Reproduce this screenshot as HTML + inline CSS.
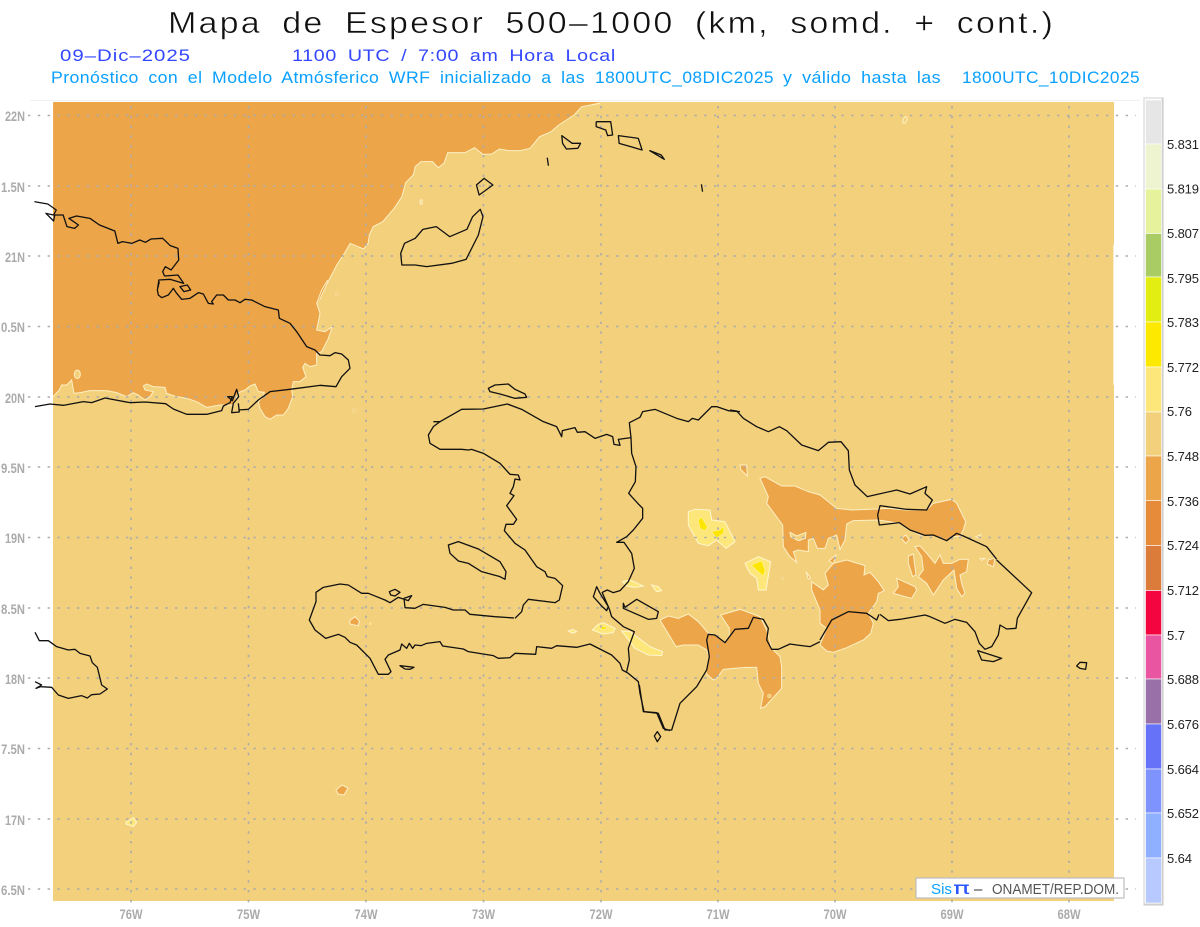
<!DOCTYPE html>
<html lang="es">
<head>
<meta charset="utf-8">
<title>Mapa de Espesor</title>
<style>
html,body{margin:0;padding:0;background:#fff}
body{width:1200px;height:927px;overflow:hidden}
svg{display:block;font-family:"Liberation Sans",sans-serif}
polygon,polyline,line,path{vector-effect:non-scaling-stroke}
.c{fill:none;stroke:#111;stroke-width:1.3;stroke-linejoin:round}
.o{fill:#eca549;stroke:#fdf0c4;stroke-width:1}
.f{fill:#eca549;stroke:none}
.l{fill:none;stroke:#fdf0c4;stroke-width:1}
.t{fill:#f3d07c;stroke:#fdf0c4;stroke-width:1}
.y{fill:#fee77a;stroke:#fff6cf;stroke-width:1}
.yy{fill:#fce600;stroke:#fff6a0;stroke-width:.5}
.g{stroke:#ababab;stroke-width:1.6;stroke-dasharray:2.4 7.4;fill:none}
.ax{fill:#ababab;font-weight:700;font-size:14px}
.cb{fill:#222;font-size:13px}
</style>
</head>
<body>
<svg width="1200" height="927" viewBox="0 0 1200 927" xmlns="http://www.w3.org/2000/svg">
<rect width="1200" height="927" fill="#fff"/>

<!-- titles -->
<text x="168" y="33" font-size="31" fill="#111" stroke="#fff" stroke-width=".5" letter-spacing="2" word-spacing="8" textLength="887" lengthAdjust="spacingAndGlyphs">Mapa de Espesor 500–1000 (km, somd. + cont.)</text>
<text x="60" y="61" font-size="17" fill="#3347ff" letter-spacing=".8" textLength="131" lengthAdjust="spacingAndGlyphs">09–Dic–2025</text>
<text x="292" y="61" font-size="17" fill="#3347ff" letter-spacing=".6" word-spacing="4" textLength="324" lengthAdjust="spacingAndGlyphs">1100 UTC / 7:00 am Hora Local</text>
<g font-size="16.5" fill="#0aa0ff" letter-spacing=".4" word-spacing="4">
<text x="51" y="83" textLength="534" lengthAdjust="spacingAndGlyphs">Pronóstico con el Modelo Atmósferico WRF inicializado a las</text>
<text x="595" y="83" textLength="179" lengthAdjust="spacingAndGlyphs">1800UTC_08DIC2025</text>
<text x="783" y="83" textLength="158" lengthAdjust="spacingAndGlyphs">y válido hasta las</text>
<text x="962" y="83" textLength="178" lengthAdjust="spacingAndGlyphs">1800UTC_10DIC2025</text>
</g>

<line x1="30" y1="100.5" x2="1140" y2="100.5" stroke="#f0f0f0"/>

<!-- map background -->
<rect x="53" y="102" width="1061" height="799" fill="#f3d07c"/>
<line x1="1113.5" y1="245" x2="1113.5" y2="385" stroke="#fbeecb" stroke-width="1"/>

<!-- NW orange region: upper part -->
<g transform="scale(.3827,.33333)">
<polygon class="f" points="139,306 1568,306 1520,320 1500,345 1460,375 1440,395 1410,410 1385,445 1360,452 1330,452 1305,447 1285,462 1262,463 1240,443 1215,458 1170,458 1160,490 1145,503 1130,485 1100,485 1085,500 1080,525 1060,548 1050,590 1030,625 1000,665 975,680 965,705 962,730 950,747 915,730 900,760 880,795 855,850 835,900 139,900"/>
<polyline class="l" points="1568,310 1520,320 1500,345 1460,375 1440,395 1410,410 1385,445 1360,452 1330,452 1305,447 1285,462 1262,463 1240,443 1215,458 1170,458 1160,490 1145,503 1130,485 1100,485 1085,500 1080,525 1060,548 1050,590 1030,625 1000,665 975,680 965,705 962,730 950,747 915,730 900,760 880,795 855,850 835,900"/>
<polygon class="t" points="1098,600 1103,600 1103,612 1098,612"/>
</g>
<!-- NW orange region: lower part -->
<g transform="translate(0,280) scale(.33333)">
<polygon class="f" points="159,0 983,0 965,30 950,70 960,100 950,150 975,155 997,140 985,175 965,215 950,220 950,255 930,260 915,250 908,262 918,290 900,305 880,305 875,330 878,350 865,385 850,405 830,405 810,418 795,410 780,385 775,365 790,350 793,337 775,335 765,312 750,318 735,330 715,338 700,375 660,375 620,382 590,365 560,355 530,350 500,340 495,322 460,320 440,312 430,318 435,330 460,335 450,350 435,360 415,345 400,338 380,350 350,338 320,332 270,332 240,338 222,340 215,300 200,315 185,315 178,330 159,350"/>
<polyline class="l" points="983,0 965,30 950,70 960,100 950,150 975,155 997,140 985,175 965,215 950,220 950,255 930,260 915,250 908,262 918,290 900,305 880,305 875,330 878,350 865,385 850,405 830,405 810,418 795,410 780,385 775,365 790,350 793,337 775,335 765,312 750,318 735,330 715,338 700,375 660,375 620,382 590,365 560,355 530,350 500,340 495,322 460,320 440,312 430,318 435,330 460,335 450,350 435,360 415,345 400,338 380,350 350,338 320,332 270,332 240,338 222,340 215,300 200,315 185,315 178,330 159,350"/>
<ellipse cx="232" cy="283" rx="9" ry="13" fill="#f3d07c" stroke="#fdf0c4" vector-effect="non-scaling-stroke"/>
<circle cx="1010" cy="43" r="5" class="t"/>
<circle cx="1062" cy="392" r="6" class="t"/>
</g>

<!-- orange blobs, Dominican Republic -->
<g transform="translate(730,400) scale(.33333)">
<polygon class="o" points="90,235 105,230 155,258 195,258 235,275 270,285 295,305 320,325 365,330 443,327 470,325 530,330 590,330 610,310 665,298 680,310 707,365 700,390 690,408 670,410 650,422 610,405 570,405 530,385 510,370 445,360 370,362 350,372 345,420 330,448 320,405 295,415 285,445 262,445 250,415 235,420 235,455 205,450 190,455 200,487 180,470 160,440 158,375 110,310 115,290"/>
<polygon class="t" points="180,397 200,408 228,397 226,415 205,422 182,410"/>
<polygon class="o" points="30,195 50,195 52,228 32,208"/>
<polygon class="o" points="515,415 527,405 537,420 527,430"/>
<polygon class="o" points="297,482 318,465 310,492"/>
<polygon class="o" points="245,545 280,570 295,555 285,520 310,490 350,480 405,497 402,525 420,517 445,545 463,572 445,580 440,605 415,640 430,670 422,700 400,720 350,743 310,757 290,753 270,735 290,685 270,670 270,630 245,570"/>
<polygon class="o" points="228,515 242,535 235,538"/>
<polygon class="o" points="500,535 555,560 560,570 545,595 525,590 490,580 505,560"/>
<polygon class="o" points="535,468 550,462 558,525 548,530 535,490"/>
<polygon class="o" points="555,440 570,438 590,460 615,490 630,465 640,490 665,490 690,478 715,478 710,515 690,525 695,550 705,580 695,590 680,565 672,510 640,540 610,585 590,550 565,530 580,510 575,470"/>
<polygon class="o" points="775,480 795,473 790,500 772,492"/>
<polygon class="o" points="750,475 765,475 755,481"/>
<polygon class="o" points="738,410 752,404 745,414"/>
<polygon class="y" points="45,490 85,470 122,485 108,570 85,570 80,535 60,520"/>
<polygon class="yy" points="65,495 95,483 105,510 100,528 80,510"/>
<circle cx="158" cy="535" r="4" class="t"/>
</g>

<!-- orange blob, south -->
<g transform="translate(600,590) scale(.33333)">
<polygon class="o" points="180,90 205,78 235,85 265,72 295,95 325,130 345,135 375,158 388,140 388,115 362,75 420,58 480,80 500,120 515,175 540,200 545,230 545,295 495,350 482,355 490,310 475,280 470,232 435,232 370,238 350,265 340,270 318,250 328,200 320,180 295,165 250,165 228,170 210,140"/>
<circle cx="508" cy="318" r="6" class="t"/>
</g>

<!-- yellow spots -->
<g transform="translate(400,380) scale(.33333)">
<polygon class="y" points="865,395 885,388 930,390 935,420 975,425 1005,485 978,505 950,480 925,497 895,490 865,435"/>
<polygon class="yy" points="895,420 905,413 922,440 915,452 900,445"/>
<polygon class="yy" points="935,455 960,450 972,440 970,460 950,473"/>
<polygon class="y" points="668,605 690,600 730,618 705,622 680,618"/>
<polygon class="y" points="755,615 775,620 785,632 770,635"/>
</g>
<g transform="translate(290,560) scale(.33333)">
<polygon class="y" points="907,210 925,193 940,188 975,205 970,218 940,222"/>
<polygon class="yy" points="935,200 950,200 945,208 935,208"/>
<polygon class="y" points="835,213 848,208 860,215 848,220"/>
<polygon class="y" points="995,213 1020,215 1080,260 1118,275 1115,287 1075,285 1035,265"/>
<polygon class="o" points="178,183 195,170 208,183 205,197 182,193"/>
<circle cx="241" cy="191" r="3" class="y"/>
</g>
<g transform="translate(0,620) scale(.33333)">
<polygon class="y" points="378,607 400,593 410,607 400,620 378,612"/>
</g>
<polygon class="o" points="336,790 342,785 348,788 344,795 338,794"/>
<ellipse cx="905" cy="120" rx="1.8" ry="3.6" transform="rotate(25 905 120)" fill="#f3d07c" stroke="#fdf0c4"/>

<!-- graticule -->
<g class="g">
<line x1="28" y1="115.5" x2="1136" y2="115.5"/>
<line x1="28" y1="186" x2="1136" y2="186"/>
<line x1="28" y1="256" x2="1136" y2="256"/>
<line x1="28" y1="326.5" x2="1136" y2="326.5"/>
<line x1="28" y1="397" x2="1136" y2="397"/>
<line x1="28" y1="467" x2="1136" y2="467"/>
<line x1="28" y1="537.5" x2="1136" y2="537.5"/>
<line x1="28" y1="608" x2="1136" y2="608"/>
<line x1="28" y1="678" x2="1136" y2="678"/>
<line x1="28" y1="748.5" x2="1136" y2="748.5"/>
<line x1="28" y1="819" x2="1136" y2="819"/>
<line x1="28" y1="889" x2="1136" y2="889"/>
<line x1="131" y1="106" x2="131" y2="905"/>
<line x1="248.5" y1="106" x2="248.5" y2="905"/>
<line x1="366" y1="106" x2="366" y2="905"/>
<line x1="483.5" y1="106" x2="483.5" y2="905"/>
<line x1="601" y1="106" x2="601" y2="905"/>
<line x1="718" y1="106" x2="718" y2="905"/>
<line x1="835" y1="106" x2="835" y2="905"/>
<line x1="952" y1="106" x2="952" y2="905"/>
<line x1="1069" y1="106" x2="1069" y2="905"/>
</g>

<!-- coasts zoom-1 frame -->
<g transform="scale(.3827,.33333)">
<polyline class="c" points="90,605 100,607 125,612 147,630 140,645 120,640 140,663 143,645 165,645 175,680 195,685 205,675 180,655 200,648 235,655 260,675 300,693 308,730 320,725 345,730 365,720 380,727 395,717 425,715 445,737 465,745 467,780 447,810 432,800 425,815 430,828 465,825 480,850 445,838 415,840 412,865"/>
<polygon class="c" points="1245,555 1265,535 1288,555 1252,585"/>
<polygon class="c" points="1050,795 1047,760 1057,730 1085,715 1105,688 1140,680 1175,710 1220,688 1235,650 1255,628 1262,650 1250,705 1218,778 1180,790 1115,800 1085,795"/>
<polygon class="c" points="1468,407 1495,430 1517,430 1510,445 1480,447 1470,430"/>
<polyline class="c" points="1430,473 1433,497"/>
</g>
<!-- coasts zoom-2 frame -->
<g transform="translate(600,0) scale(.3827,.33333)">
<polyline class="c" points="-10,365 28,365 33,405 20,407 15,390 -10,380 -10,365"/>
<polygon class="c" points="48,407 100,415 110,450 80,440 50,430"/>
<polygon class="c" points="130,452 160,465 168,478"/>
<polyline class="c" points="265,553 268,575"/>
</g>
<!-- Cuba east / south coast -->
<g transform="translate(0,280) scale(.33333)">
<polyline class="c" points="105,380 150,372 190,376 250,365 275,368 315,354 390,368 435,366 497,371 520,387 560,403 620,403 665,392 670,378 690,368 697,350 683,350 697,362 710,328 716,350 700,370 695,398 718,396 715,370"/>
<polyline class="c" points="715,390 745,388 775,360 810,335 870,328 960,316 1008,320 1025,290 1050,265 1045,240 1025,222 1005,218 990,227 960,225 945,210 920,200 890,155 870,130 838,115 835,90 795,80 755,60 735,58 720,68 705,60 685,60 670,45 650,45 635,65 640,72 625,70 610,42 595,38 570,55 545,58 530,40 520,25 505,45 485,53 475,45 472,30 478,5"/>
<polygon class="c" points="540,20 562,15 572,30 552,35"/>
</g>
<!-- Haiti, Tortue, Gonave -->
<g transform="translate(400,380) scale(.33333)">
<polygon class="c" points="265,25 285,15 325,12 345,28 375,42 380,52 345,55 300,42 270,35"/>
<polyline class="c" points="100,125 120,125 185,88 250,87 322,72 365,88 430,125 470,140 485,170 487,152 525,143 532,157 555,155 585,175 620,163 638,170 642,193 660,196 655,178 693,173 688,128 720,112 728,95 765,88 830,115 865,125 877,115 895,120 935,80 950,80 985,92 1020,95"/>
<polyline class="c" points="693,173 695,220 708,260 706,305 686,340 715,372 728,385 728,415 700,450 680,470 650,487 672,487 695,520 703,565 685,605 660,632 640,638 622,630 607,637"/>
<polygon class="c" points="590,620 580,650 607,680 620,692 625,680 600,640"/>
<polygon class="c" points="145,495 175,485 235,507 300,545 318,575 315,598 300,590 245,575 205,550 175,543 150,520"/>
<polyline class="c" points="120,125 100,140 85,165 90,190 120,208 185,208 205,210 215,208 250,220 300,250 330,283 355,285 360,300 345,297 340,320 330,340 342,347 320,377 350,418 340,433 318,433 313,452 345,490 375,510 410,560 435,575 442,590 465,595 488,617 478,660 465,668 385,658 370,675 365,695 345,715"/>
</g>
<g transform="translate(290,560) scale(.33333)">
<polyline class="c" points="672,174 615,170 540,163 525,150 490,150 465,142 400,133 375,145 345,143 342,115 365,107 355,122 325,112 300,128 285,120 235,100 215,100 175,75 150,72 100,82 78,97 78,125 58,180 75,210 107,235 145,223 165,232 180,247 200,255 240,295 265,343 295,343 303,335 285,298 295,285 330,270 335,252 350,265 358,250 368,265 375,255 393,257 410,250 450,245 458,258 520,267 535,275 610,287 625,295 660,293 675,280 737,283 740,260 785,265 800,257 860,262 900,252 965,285 990,310 997,330 1015,340 1045,365 1050,400 1062,455 1100,458 1120,505 1140,512"/>
<polyline class="c" points="936,96 958,147 965,170 1000,200 1033,215 1015,265 1018,300 1010,335"/>
<polygon class="c" points="330,317 372,322 360,328 345,327"/>
<polygon class="c" points="298,95 315,88 330,97 315,108 302,105"/>
</g>
<!-- Dominican Republic -->
<g transform="translate(730,400) scale(.33333)">
<polyline class="c" points="0,30 20,33 40,55 80,80 115,95 148,80 170,92 215,135 265,152 295,127 333,125 355,152 358,210 375,255 412,290 500,270 540,282 590,260 585,280 607,300 590,330 530,328 450,317 443,345 448,375 508,368 540,390 585,406 610,405 650,422 680,400 700,408 770,440 800,478"/>
<polyline class="c" points="447,643 440,660 410,640 355,635 305,660 270,720"/>
</g>
<g transform="translate(880,560) scale(.33333)">
<polyline class="c" points="350,0 455,98 412,175 408,205 380,207 360,195 355,225 335,260 315,268 298,250 285,215 260,187 225,178 195,190 150,170 135,165 60,178 25,182 0,163"/>
<polygon class="c" points="293,272 365,295 340,305 305,300"/>
<polygon class="c" points="590,318 600,307 620,308 617,328 600,325"/>
</g>
<g transform="translate(600,590) scale(.33333)">
<polyline class="c" points="660,155 630,170 590,165 570,162 535,178 515,178 500,150 505,115 490,88 460,82 445,115 405,118 375,158 345,135 325,133 320,150 328,200 320,240 290,290 240,340 215,420 195,420 175,370 130,365 118,285"/>
<polygon class="c" points="70,40 75,52 110,28 175,65 170,85 145,88 70,55"/>
<polygon class="c" points="163,438 172,425 182,440 172,455"/>
</g>
<!-- Jamaica -->
<g transform="translate(0,620) scale(.33333)">
<polyline class="c" points="105,37 118,62 145,62 170,80 205,90 225,88 240,100 270,108 277,128 292,142 305,195 322,207 300,222 275,224 262,234 245,227 205,235 175,225 155,202 122,200 108,205 125,195 105,185"/>
</g>

<!-- axis labels -->
<g class="ax" text-anchor="end">
<text x="25" y="121" textLength="20" lengthAdjust="spacingAndGlyphs">22N</text>
<text x="25" y="192" textLength="24" lengthAdjust="spacingAndGlyphs">1.5N</text>
<text x="25" y="262" textLength="20" lengthAdjust="spacingAndGlyphs">21N</text>
<text x="25" y="332" textLength="24" lengthAdjust="spacingAndGlyphs">0.5N</text>
<text x="25" y="403" textLength="20" lengthAdjust="spacingAndGlyphs">20N</text>
<text x="25" y="473" textLength="24" lengthAdjust="spacingAndGlyphs">9.5N</text>
<text x="25" y="543" textLength="20" lengthAdjust="spacingAndGlyphs">19N</text>
<text x="25" y="614" textLength="24" lengthAdjust="spacingAndGlyphs">8.5N</text>
<text x="25" y="684" textLength="20" lengthAdjust="spacingAndGlyphs">18N</text>
<text x="25" y="754" textLength="24" lengthAdjust="spacingAndGlyphs">7.5N</text>
<text x="25" y="825" textLength="20" lengthAdjust="spacingAndGlyphs">17N</text>
<text x="25" y="895" textLength="24" lengthAdjust="spacingAndGlyphs">6.5N</text>
</g>
<g class="ax" text-anchor="middle">
<text x="131" y="919" textLength="23" lengthAdjust="spacingAndGlyphs">76W</text>
<text x="248.5" y="919" textLength="23" lengthAdjust="spacingAndGlyphs">75W</text>
<text x="366" y="919" textLength="23" lengthAdjust="spacingAndGlyphs">74W</text>
<text x="483.5" y="919" textLength="23" lengthAdjust="spacingAndGlyphs">73W</text>
<text x="601" y="919" textLength="23" lengthAdjust="spacingAndGlyphs">72W</text>
<text x="718" y="919" textLength="23" lengthAdjust="spacingAndGlyphs">71W</text>
<text x="835" y="919" textLength="23" lengthAdjust="spacingAndGlyphs">70W</text>
<text x="952" y="919" textLength="23" lengthAdjust="spacingAndGlyphs">69W</text>
<text x="1069" y="919" textLength="23" lengthAdjust="spacingAndGlyphs">68W</text>
</g>

<!-- credit box -->
<rect x="916" y="878" width="208" height="20" fill="#fff" stroke="#bdbdbd" stroke-width="1.2"/>
<text x="931" y="894" font-size="15" fill="#0aa0ff" textLength="21" lengthAdjust="spacingAndGlyphs">Sis</text>
<text x="953" y="894" font-size="17" fill="#2a55ff" font-family="DejaVu Sans" textLength="17" lengthAdjust="spacingAndGlyphs">π</text>
<text x="974" y="894" font-size="15" fill="#333">–</text>
<text x="992" y="894" font-size="15" fill="#555" textLength="127" lengthAdjust="spacingAndGlyphs">ONAMET/REP.DOM.</text>

<!-- colour bar -->
<rect x="1144" y="98" width="19" height="807" fill="#fff" stroke="#d8d8d8" stroke-width="1.2"/>
<line x1="1162.500" y1="98" x2="1162.500" y2="905" stroke="#cfcfcf" stroke-width="2"/>
<line x1="1144" y1="904.500" x2="1163" y2="904.500" stroke="#cfcfcf" stroke-width="2"/>
<g stroke="#fff" stroke-width=".6">
<rect x="1145.5" y="100" width="16" height="44" fill="#e6e6e6"/>
<rect x="1145.5" y="144" width="16" height="45" fill="#eef3d0"/>
<rect x="1145.5" y="189" width="16" height="44.5" fill="#e6f29c"/>
<rect x="1145.5" y="233.5" width="16" height="43.5" fill="#a9cd64"/>
<rect x="1145.5" y="277" width="16" height="45" fill="#e2ee12"/>
<rect x="1145.5" y="322" width="16" height="45" fill="#fde800"/>
<rect x="1145.5" y="367" width="16" height="45" fill="#fee77a"/>
<rect x="1145.5" y="412" width="16" height="44" fill="#f3d07c"/>
<rect x="1145.5" y="456" width="16" height="44.5" fill="#eca549"/>
<rect x="1145.5" y="500.5" width="16" height="45" fill="#e58b3a"/>
<rect x="1145.5" y="545.5" width="16" height="45" fill="#db7c3b"/>
<rect x="1145.5" y="590.5" width="16" height="44.5" fill="#f5053f"/>
<rect x="1145.5" y="635" width="16" height="44" fill="#e955a0"/>
<rect x="1145.5" y="679" width="16" height="45" fill="#9a70a8"/>
<rect x="1145.5" y="724" width="16" height="45" fill="#6672f8"/>
<rect x="1145.5" y="769" width="16" height="44" fill="#7f93ff"/>
<rect x="1145.5" y="813" width="16" height="45" fill="#8fb0ff"/>
<rect x="1145.5" y="858" width="16" height="45" fill="#b7c9fe"/>
</g>
<g class="cb">
<text x="1167" y="149" textLength="32">5.831</text>
<text x="1167" y="193.500" textLength="32">5.819</text>
<text x="1167" y="238" textLength="32">5.807</text>
<text x="1167" y="283" textLength="32">5.795</text>
<text x="1167" y="327" textLength="32">5.783</text>
<text x="1167" y="372" textLength="32">5.772</text>
<text x="1167" y="416" textLength="25">5.76</text>
<text x="1167" y="461" textLength="32">5.748</text>
<text x="1167" y="506" textLength="32">5.736</text>
<text x="1167" y="550" textLength="32">5.724</text>
<text x="1167" y="595" textLength="32">5.712</text>
<text x="1167" y="640" textLength="18">5.7</text>
<text x="1167" y="684" textLength="32">5.688</text>
<text x="1167" y="729" textLength="32">5.676</text>
<text x="1167" y="774" textLength="32">5.664</text>
<text x="1167" y="818" textLength="32">5.652</text>
<text x="1167" y="863" textLength="25">5.64</text>
</g>
</svg>
</body>
</html>
